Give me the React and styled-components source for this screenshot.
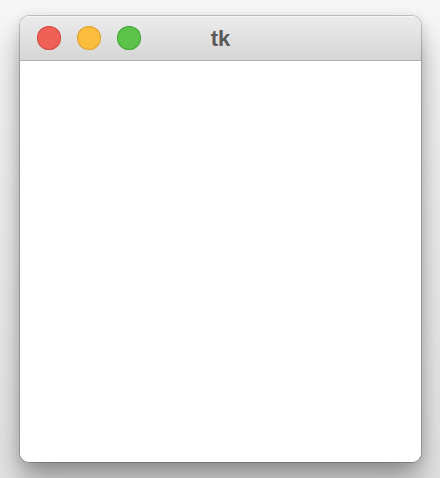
import React from "react";
import styled, { createGlobalStyle } from "styled-components";

const Global = createGlobalStyle`
  html, body { margin: 0; padding: 0; }
  body {
    width: 440px;
    height: 478px;
    overflow: hidden;
    background: linear-gradient(#f7f7f7 0%, #eeeeee 50%, #e4e4e4 100%);
    font-family: "Liberation Sans", Arial, sans-serif;
  }
`;

const Stage = styled.div`
  padding: 16px 0 0 20px;
`;

const Window = styled.div`
  width: 401px;
  height: 446px;
  border-radius: 9px;
  background: #fff;
  overflow: hidden;
  display: flex;
  flex-direction: column;
  box-shadow: 0 0 0 1px rgba(0, 0, 0, 0.18), 0 20px 30px rgba(0, 0, 0, 0.34),
    0 2px 12px rgba(0, 0, 0, 0.12);
`;

const TitleBar = styled.div`
  height: 44px;
  flex: none;
  position: relative;
  display: flex;
  align-items: center;
  gap: 16px;
  padding-left: 17px;
  background: linear-gradient(#ececec, #d6d6d6);
  border-bottom: 1px solid #b0b0b0;
  box-shadow: inset 0 1px 0 #f6f6f6;
`;

const Light = styled.span`
  width: 24px;
  height: 24px;
  border-radius: 50%;
  background: ${(p) => p.$fill};
  box-shadow: inset 0 0 0 1px ${(p) => p.$edge};
`;

const Title = styled.div`
  position: absolute;
  left: 0;
  right: 0;
  top: 2px;
  bottom: 0;
  display: flex;
  align-items: center;
  justify-content: center;
  font-size: 22px;
  font-weight: bold;
  color: #5a5a5a;
  pointer-events: none;
`;

const Content = styled.div`
  flex: 1;
  background: #fff;
`;

export default function App() {
  return (
    <>
      <Global />
      <Stage>
        <Window>
          <TitleBar>
            <Light $fill="#ef6157" $edge="#d24e45" />
            <Light $fill="#fbbd3e" $edge="#dba437" />
            <Light $fill="#5cc24a" $edge="#48a63a" />
            <Title>tk</Title>
          </TitleBar>
          <Content />
        </Window>
      </Stage>
    </>
  );
}
